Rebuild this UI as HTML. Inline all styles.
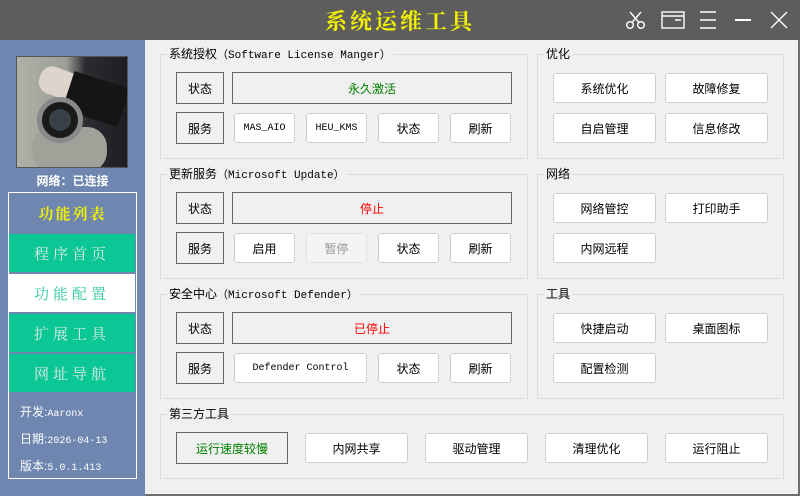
<!DOCTYPE html>
<html><head><meta charset="utf-8"><style>
*{margin:0;padding:0;box-sizing:border-box}
body{width:800px;height:496px;position:relative;background:#f0f0f0;font-family:"Liberation Sans","Noto Sans CJK SC",sans-serif;font-size:12px;color:#000;overflow:hidden}
.a{position:absolute}
.title{left:0;top:0;width:800px;height:40px;background:#5d5d5d}
.tt{left:0;top:5px;width:800px;text-align:center;color:#f2f200;font-family:"Noto Serif CJK SC",serif;font-weight:bold;font-size:22px;letter-spacing:3px}
.side{left:0;top:40px;width:145px;height:456px;background:#6e86b0}
.gb{position:absolute;border:1px solid #dcdcdc}
.gl{position:absolute;background:#f0f0f0;padding:0 2px;font-size:12px;top:-8px;left:6px;line-height:15px}
.sb{position:absolute;border:1px solid #666;background:#f0f0f0;display:flex;align-items:center;justify-content:center;font-size:12px}
.btn{position:absolute;border:1px solid #d0d0d0;border-radius:3px;background:#fff;display:flex;align-items:center;justify-content:center;font-size:12px}
.mono{font-family:"Liberation Mono","Noto Sans CJK SC",monospace;font-size:10px}
.gl .mono{font-size:11px}
.mi{position:absolute;left:1px;width:126px;height:38px;background:#0bc795;color:#e0ece8;font-family:"Noto Serif CJK SC",serif;font-size:15px;letter-spacing:4px;display:flex;align-items:center;justify-content:center}
</style></head><body>
<div class="a title"></div>
<div class="a tt">系统运维工具</div>
<svg class="a" style="left:620px;top:8px" width="175" height="24" viewBox="0 0 175 24" fill="none" stroke="#fff" stroke-width="1.4">
<circle cx="10" cy="17" r="3.3"/><circle cx="21" cy="17" r="3.3"/><path d="M12 14.5L21 4M19 14.5L10 4"/>
<rect x="42" y="4" width="22" height="16"/><path d="M42 8H64M55 12H61"/>
<path d="M80 4H96M80 12H96M80 20H96"/>
<path d="M115 12H131" stroke-width="2"/>
<path d="M151 4L167 20M167 4L151 20"/>
</svg>
<div class="a side"></div>
<div class="a" style="left:16px;top:56px;width:112px;height:112px;border:1px solid #555;background:linear-gradient(90deg,#b0b2a8 0%,#9a9e94 45%,#2a2c30 62%,#1c1e22 100%);overflow:hidden">
<div class="a" style="left:15px;top:70px;width:75px;height:45px;background:#a0a29a;border-radius:20px"></div>
<div class="a" style="left:22px;top:12px;width:40px;height:28px;background:#ddd5cc;border-radius:12px;transform:rotate(20deg)"></div>
<div class="a" style="left:50px;top:22px;width:58px;height:40px;background:#151515;transform:rotate(18deg)"></div>
<div class="a" style="left:20px;top:40px;width:46px;height:46px;border-radius:50%;background:#1a1a1a;border:5px solid #888"></div>
<div class="a" style="left:32px;top:52px;width:22px;height:22px;border-radius:50%;background:#3a4048"></div>
</div>
<div class="a" style="left:0;top:172px;width:145px;text-align:center;color:#fff;font-size:12px;font-weight:bold">网络：已连接</div>
<div class="a" style="left:8px;top:192px;width:129px;height:287px;border:1px solid #fff">
<div class="a" style="left:0;top:0;width:127px;height:41px;display:flex;align-items:center;justify-content:center;color:#f2f200;font-family:'Noto Serif CJK SC',serif;font-weight:bold;font-size:15px;letter-spacing:2px">功能列表</div>
<div class="mi" style="left:0;top:41px">程序首页</div>
<div class="mi" style="left:0;top:81px;background:#fff;color:#2ec9a0">功能配置</div>
<div class="mi" style="left:0;top:121px">扩展工具</div>
<div class="mi" style="left:0;top:161px">网址导航</div>
<div class="a" style="left:11px;top:207px;color:#fff;font-size:12px;line-height:24px">开发:<span class="mono">Aaronx</span><br>日期:<span class="mono">2026-04-13</span><br>版本:<span class="mono">5.0.1.413</span></div>
</div>

<div class="gb" style="left:160px;top:54px;width:368px;height:105px"><div class="gl">系统授权<span class="mono">（Software License Manger）</span></div></div>
<div class="sb" style="left:176px;top:72px;width:48px;height:32px">状态</div>
<div class="sb" style="left:232px;top:72px;width:280px;height:32px;color:#008000">永久激活</div>
<div class="sb" style="left:176px;top:112px;width:48px;height:32px">服务</div>
<div class="btn mono" style="left:234px;top:113px;width:61px;height:30px">MAS_AIO</div>
<div class="btn mono" style="left:306px;top:113px;width:61px;height:30px">HEU_KMS</div>
<div class="btn" style="left:378px;top:113px;width:61px;height:30px">状态</div>
<div class="btn" style="left:450px;top:113px;width:61px;height:30px">刷新</div>

<div class="gb" style="left:160px;top:174px;width:368px;height:105px"><div class="gl">更新服务<span class="mono">（Microsoft Update）</span></div></div>
<div class="sb" style="left:176px;top:192px;width:48px;height:32px">状态</div>
<div class="sb" style="left:232px;top:192px;width:280px;height:32px;color:#f00">停止</div>
<div class="sb" style="left:176px;top:232px;width:48px;height:32px">服务</div>
<div class="btn" style="left:234px;top:233px;width:61px;height:30px">启用</div>
<div class="btn" style="left:306px;top:233px;width:61px;height:30px;background:#f4f4f4;border-color:#e4e4e4;color:#999">暂停</div>
<div class="btn" style="left:378px;top:233px;width:61px;height:30px">状态</div>
<div class="btn" style="left:450px;top:233px;width:61px;height:30px">刷新</div>

<div class="gb" style="left:160px;top:294px;width:368px;height:105px"><div class="gl">安全中心<span class="mono">（Microsoft Defender）</span></div></div>
<div class="sb" style="left:176px;top:312px;width:48px;height:32px">状态</div>
<div class="sb" style="left:232px;top:312px;width:280px;height:32px;color:#f00">已停止</div>
<div class="sb" style="left:176px;top:352px;width:48px;height:32px">服务</div>
<div class="btn mono" style="left:234px;top:353px;width:133px;height:30px">Defender Control</div>
<div class="btn" style="left:378px;top:353px;width:61px;height:30px">状态</div>
<div class="btn" style="left:450px;top:353px;width:61px;height:30px">刷新</div>

<div class="gb" style="left:537px;top:54px;width:247px;height:105px"><div class="gl">优化</div></div>
<div class="btn" style="left:553px;top:73px;width:103px;height:30px">系统优化</div>
<div class="btn" style="left:665px;top:73px;width:103px;height:30px">故障修复</div>
<div class="btn" style="left:553px;top:113px;width:103px;height:30px">自启管理</div>
<div class="btn" style="left:665px;top:113px;width:103px;height:30px">信息修改</div>

<div class="gb" style="left:537px;top:174px;width:247px;height:105px"><div class="gl">网络</div></div>
<div class="btn" style="left:553px;top:193px;width:103px;height:30px">网络管控</div>
<div class="btn" style="left:665px;top:193px;width:103px;height:30px">打印助手</div>
<div class="btn" style="left:553px;top:233px;width:103px;height:30px">内网远程</div>

<div class="gb" style="left:537px;top:294px;width:247px;height:105px"><div class="gl">工具</div></div>
<div class="btn" style="left:553px;top:313px;width:103px;height:30px">快捷启动</div>
<div class="btn" style="left:665px;top:313px;width:103px;height:30px">桌面图标</div>
<div class="btn" style="left:553px;top:353px;width:103px;height:30px">配置检测</div>

<div class="gb" style="left:160px;top:414px;width:624px;height:65px"><div class="gl">第三方工具</div></div>
<div class="sb" style="left:176px;top:432px;width:112px;height:32px;color:#008000">运行速度较慢</div>
<div class="btn" style="left:305px;top:433px;width:103px;height:30px">内网共享</div>
<div class="btn" style="left:425px;top:433px;width:103px;height:30px">驱动管理</div>
<div class="btn" style="left:545px;top:433px;width:103px;height:30px">清理优化</div>
<div class="btn" style="left:665px;top:433px;width:103px;height:30px">运行阻止</div>
<div class="a" style="left:145px;top:494px;width:655px;height:2px;background:#6e6e6e"></div>
<div class="a" style="left:798px;top:40px;width:2px;height:456px;background:#6e6e6e"></div>
</body></html>
